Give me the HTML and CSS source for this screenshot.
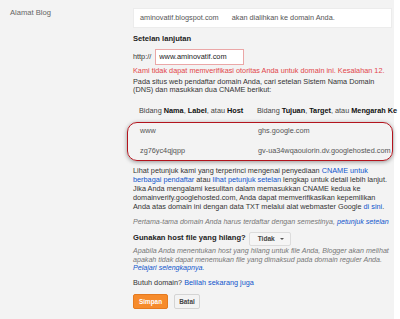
FILE: index.html
```
<!DOCTYPE html>
<html lang="id">
<head>
	<meta charset="utf-8">
	<title>Setelan Publikasi</title>
	<link rel="stylesheet" href="styles.css">
</head>
<body>
	<div class="panel">
		<div class="label">Alamat Blog</div>
		<div class="content">
			<div class="url-box">
				<span>aminovatif.blogspot.com</span>
				<span>akan dialihkan ke domain Anda.</span>
			</div>

			<h3 class="section-title">Setelan lanjutan</h3>
			<div class="http-row">
				<span>http://</span>
				<input type="text" value="www.aminovatif.com" readonly>
			</div>
			<p class="error">Kami tidak dapat memverifikasi otoritas Anda untuk domain ini. Kesalahan 12.</p>
			<p class="text">Pada situs web pendaftar domain Anda, cari setelan Sistem Nama Domain (DNS) dan masukkan dua CNAME berikut:</p>

			<div class="cname-head">
				<span class="col">Bidang <b>Nama</b>, <b>Label</b>, atau <b>Host</b></span>
				<span class="col">Bidang <b>Tujuan</b>, <b>Target</b>, atau <b>Mengarah Ke</b></span>
			</div>
			<div class="cname-box">
				<div class="cname-row">
					<span class="col">www</span>
					<span class="col">ghs.google.com</span>
				</div>
				<div class="cname-row">
					<span class="col">zg76yc4qjqpp</span>
					<span class="col">gv-ua34wqaouiorin.dv.googlehosted.com</span>
				</div>
			</div>

			<p class="text help">Lihat petunjuk kami yang terperinci mengenai penyediaan <a href="#">CNAME untuk berbagai pendaftar</a> atau <a href="#">lihat petunjuk setelan</a> lengkap untuk detail lebih lanjut. Jika Anda mengalami kesulitan dalam memasukkan CNAME kedua ke domainverify.googlehosted.com, Anda dapat memverifikasikan kepemilikan Anda atas domain ini dengan data TXT melalui alat webmaster Google <a href="#">di sini</a>.</p>
			<p class="note">Pertama-tama domain Anda harus terdaftar dengan semestinya, <a href="#">petunjuk setelan</a></p>

			<div class="host-row">
				<span class="host-label">Gunakan host file yang hilang?</span>
				<button class="dropdown">Tidak <span class="caret"></span></button>
			</div>
			<p class="note small">Apabila Anda menentukan host yang hilang untuk file Anda, Blogger akan melihat apakah tidak dapat menemukan file yang dimaksud pada domain reguler Anda. <a href="#">Pelajari selengkapnya.</a></p>

			<p class="text buy">Butuh domain? <a href="#">Belilah sekarang juga</a></p>

			<div class="actions">
				<button class="btn save">Simpan</button>
				<button class="btn cancel">Batal</button>
			</div>
		</div>
	</div>
</body>
</html>
```
FILE: styles.css
```
*{
	margin: 0;
	padding: 0;
	box-sizing: border-box;
}

body{
	background: #fff;
	font-family: "Liberation Sans", Arial, sans-serif;
	font-size: 7.3px;
	line-height: 8.8px;
	color: #333;
	overflow: hidden;
}

a{
	color: #15c;
	text-decoration: none;
}

.panel{
	display: flex;
	background: #f3f3f3;
	width: 394px;
	height: 319px;
	padding-top: 8px;
}

.label{
	width: 133px;
	padding: 1px 0 0 10px;
	color: #666;
	font-size: 7.6px;
}

.content{
	width: 259px;
}

.url-box{
	display: flex;
	align-items: center;
	gap: 13px;
	height: 20px;
	padding-left: 6px;
	background: #fff;
	border: 1px solid #ececec;
	color: #555;
}

.section-title{
	margin-top: 6.6px;
	font-size: 7.6px;
	color: #222;
}

.http-row{
	display: flex;
	align-items: center;
	gap: 4px;
	margin-top: 5.6px;
}

.http-row input{
	width: 89px;
	height: 16px;
	padding: 0 3px;
	border: 1px solid #eba7a7;
	background: #fff;
	font-family: "Liberation Sans", Arial, sans-serif;
	font-size: 7.4px;
	color: #222;
	outline: none;
}

.error{
	margin-top: 1.6px;
	color: #e2464a;
}

.text{
	margin-top: 2.2px;
}

.cname-head{
	display: flex;
	margin-top: 12.2px;
	padding-left: 6px;
	white-space: nowrap;
	color: #444;
}

.cname-head b{
	color: #111;
}

.col:first-child{
	width: 118px;
	flex-shrink: 0;
}

.cname-box{
	display: flex;
	flex-direction: column;
	gap: 11.2px;
	width: 266px;
	height: 39px;
	margin: 5.6px 0 0 -6px;
	padding: 4.6px 0 0 12px;
	border: 1.2px solid #b3141d;
	border-radius: 10px;
	box-shadow: 0 1px 4px rgba(0, 0, 0, .4);
	color: #555;
}

.cname-row{
	display: flex;
	white-space: nowrap;
}

.help{
	margin-top: 6.6px;
}

.note{
	margin-top: 6.2px;
	font-style: italic;
	color: #777;
	font-size: 7.1px;
	white-space: nowrap;
}

.host-row{
	display: flex;
	align-items: center;
	gap: 3px;
	height: 14px;
	margin-top: 5.6px;
}

.host-label{
	font-weight: bold;
	font-size: 7.6px;
	color: #222;
}

.dropdown{
	display: flex;
	align-items: center;
	gap: 5px;
	height: 14px;
	padding: 0 6px 0 8px;
	border: 1px solid #dcdcdc;
	border-radius: 2px;
	background: #f5f5f5;
	font-family: "Liberation Sans", Arial, sans-serif;
	font-size: 6.6px;
	font-weight: bold;
	color: #444;
}

.caret{
	border-left: 2px solid transparent;
	border-right: 2px solid transparent;
	border-top: 2.5px solid #555;
}

.note.small{
	margin-top: 1.6px;
	line-height: 8.5px;
	white-space: normal;
}

.buy{
	margin-top: 6.5px;
}

.actions{
	display: flex;
	gap: 6px;
	margin-top: 5.6px;
}

.btn{
	height: 15px;
	border-radius: 2px;
	font-family: "Liberation Sans", Arial, sans-serif;
	font-size: 6.4px;
	font-weight: bold;
}

.save{
	width: 35px;
	background: #f68b2c;
	border: 1px solid #e57a1f;
	color: #fff;
}

.cancel{
	width: 26px;
	background: #f3f3f3;
	border: 1px solid #d4d4d4;
	color: #444;
}
```
